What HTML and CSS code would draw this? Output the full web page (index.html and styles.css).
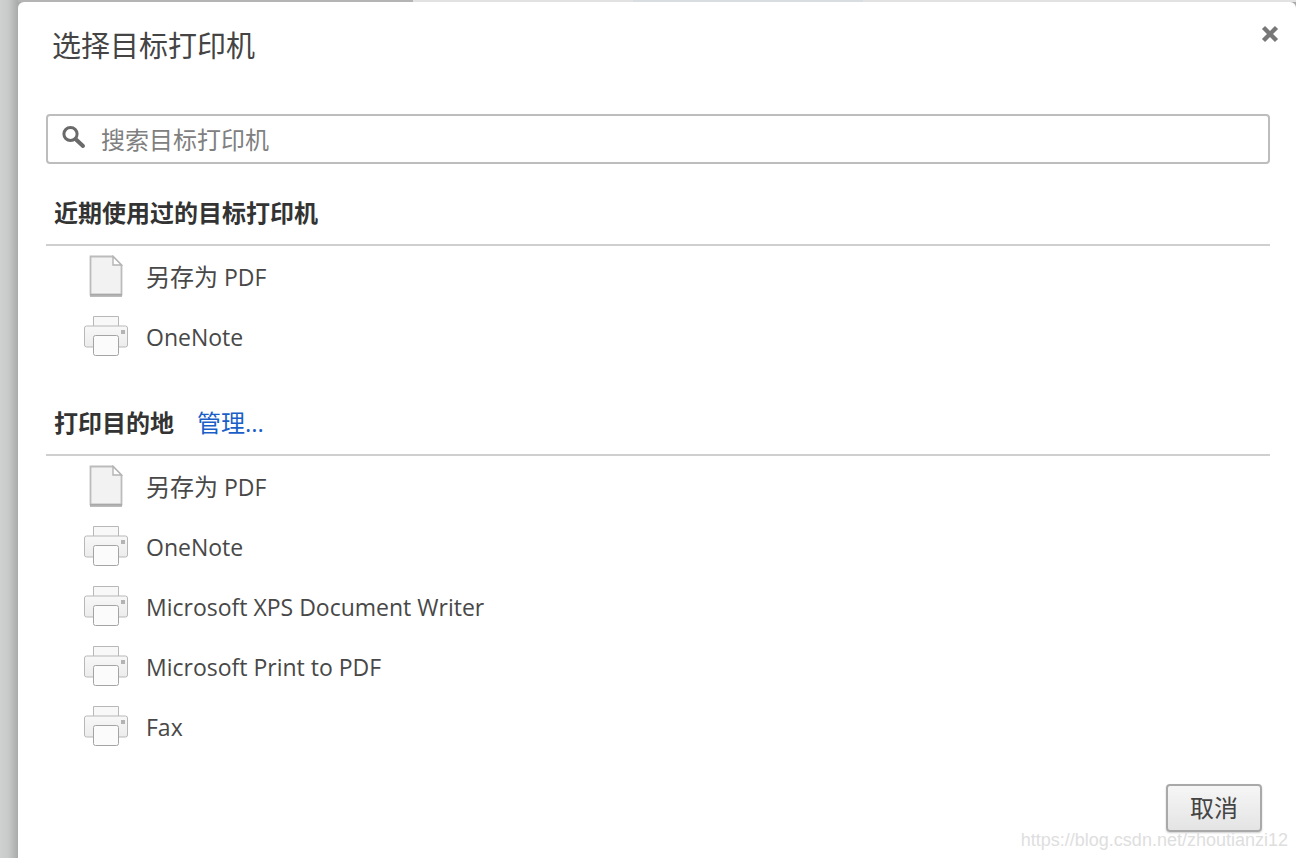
FILE: index.html
```html
<!DOCTYPE html>
<html lang="zh">
<head>
<meta charset="utf-8">
<title>选择目标打印机</title>
<link rel="stylesheet" href="styles.css">
</head>
<body>
<svg class="defs" width="0" height="0">
  <defs>
    <linearGradient id="pg" x1="0" y1="0" x2="0" y2="1"><stop offset="0" stop-color="#f8f8f8"/><stop offset="1" stop-color="#ececec"/></linearGradient>
    <symbol id="doc" viewBox="0 0 44 44">
      <path d="M7.5 1.5H30L38.5 10V39.5H7.5Z" fill="#f2f2f2" stroke="#bcbcbc" stroke-width="1.8"/>
      <path d="M7 40.5H39" stroke="#a0a0a0" stroke-width="3" opacity=".7"/>
      <path d="M30 1.5V10H38.5Z" fill="#fff" stroke="#b4b4b4" stroke-width="1.4"/>
    </symbol>
    <symbol id="printer" viewBox="0 0 44 40">
      <path d="M9.5 10V.5H34.5V10" fill="#f8f8f8" stroke="#b8b8b8"/>
      <rect x=".5" y="10" width="43" height="21" rx="2" fill="url(#pg)" stroke="#b8b8b8"/>
      <rect x="37" y="14" width="4" height="4" fill="#b4b4b4"/>
      <rect x="9.5" y="19.5" width="25" height="20" rx="2" fill="#fbfbfb" stroke="#a4a4a4"/>
    </symbol>
  </defs>
</svg>
<div class="topstrip"><div class="topstrip-dark"></div><div class="topstrip-ghost"></div></div>
<main class="dialog">
  <header class="dialog-head">
    <h1 class="title">选择目标打印机</h1>
    <svg class="close" width="20" height="20" viewBox="0 0 20 20"><path d="M3.5 3.5L16.500 16.500M16.500 3.500L3.500 16.500" stroke="#777" stroke-width="4.400"/></svg>
  </header>
  <div class="search">
    <svg class="search-icon" width="26" height="26" viewBox="0 0 26 26"><circle cx="10.500" cy="10" r="6.600" fill="none" stroke="#6a6a6a" stroke-width="3"/><path d="M15.500 15L23 22" stroke="#6a6a6a" stroke-width="4" stroke-linecap="round"/></svg>
    <span class="search-text">搜索目标打印机</span>
  </div>
  <section class="group group-recent">
    <h2 class="group-head"><span class="group-title">近期使用过的目标打印机</span></h2>
    <ul class="list">
      <li class="row"><span class="icon-cell"><svg class="ic" width="44" height="44"><use href="#doc"/></svg></span><span><span class="cjk">另存为</span> PDF</span></li>
      <li class="row"><span class="icon-cell"><svg class="ic ic-printer" width="44" height="40"><use href="#printer"/></svg></span><span>OneNote</span></li>
    </ul>
  </section>
  <section class="group group-all">
    <h2 class="group-head"><span class="group-title">打印目的地</span><a class="manage">管理...</a></h2>
    <ul class="list">
      <li class="row"><span class="icon-cell"><svg class="ic" width="44" height="44"><use href="#doc"/></svg></span><span><span class="cjk">另存为</span> PDF</span></li>
      <li class="row"><span class="icon-cell"><svg class="ic ic-printer" width="44" height="40"><use href="#printer"/></svg></span><span>OneNote</span></li>
      <li class="row"><span class="icon-cell"><svg class="ic ic-printer" width="44" height="40"><use href="#printer"/></svg></span><span>Microsoft XPS Document Writer</span></li>
      <li class="row"><span class="icon-cell"><svg class="ic ic-printer" width="44" height="40"><use href="#printer"/></svg></span><span>Microsoft Print to PDF</span></li>
      <li class="row"><span class="icon-cell"><svg class="ic ic-printer" width="44" height="40"><use href="#printer"/></svg></span><span>Fax</span></li>
    </ul>
  </section>
  <footer class="foot"><button class="cancel">取消</button></footer>
</main>
<div class="watermark">https://blog.csdn.net/zhoutianzi12</div>
</body>
</html>
```
FILE: styles.css
```css
* { box-sizing: border-box; }
html, body { margin: 0; height: 858px; overflow: hidden; }
body {
  position: relative;
  padding: 2px 0 0 18px;
  background: linear-gradient(90deg, #cfd1d1 0, #c9cbcb 8px, #a9abab 18px);
  font-family: "Open Sans", "Noto Sans CJK SC", sans-serif;
  color: #333;
}
.defs { position: absolute; }
.topstrip { position: absolute; left: 18px; right: 0; top: 0; height: 2px; background: #e2e2e2; display: flex; }
.topstrip-dark { width: 395px; background: #b4b4b4; }
.topstrip-ghost { width: 230px; margin-left: 220px; background: #d8dde1; }
.dialog {
  position: relative;
  height: 880px;
  background: #fff;
  border-radius: 6px 6px 0 0;
  padding: 0 26px 0 28px;
}
.dialog-head { height: 112px; display: flex; justify-content: space-between; align-items: flex-start; }
.title { margin: 22px 0 0 6px; font-size: 29px; line-height: 44px; font-weight: 400; color: #444; }
.close { margin: 22px -10px 0 0; }
.search {
  height: 50px;
  display: flex;
  align-items: center;
  border: 2px solid #bdbdbd;
  border-radius: 4px;
  padding-left: 12px;
}
.search-icon { flex: none; margin-top: -4px; }
.search-text { margin: 2px 0 0 15px; font-size: 24px; line-height: 44px; color: #808080; }
.group-head {
  margin: 0;
  height: 57px;
  padding: 0 0 11px 8px;
  display: flex;
  align-items: center;
  gap: 23px;
  border-bottom: 2px solid #cfcfcf;
  font-size: 24px;
  font-weight: 700;
}
.group-title { color: #333; }
.group-recent { margin-top: 25px; }
.group-all { margin-top: 32px; }
.manage { font-size: 24px; font-weight: 400; color: #1a5fc8; }
.list { list-style: none; margin: 0; padding: 1px 0 0; }
.row { height: 60px; display: flex; align-items: center; font-size: 23px; line-height: 30px; color: #484848; }
.cjk { font-size: 24px; }
.icon-cell { width: 100px; padding-left: 38px; display: flex; align-items: center; flex: none; }
.ic { display: block; margin-left: -1px; filter: blur(.4px); }
.ic-printer { margin-left: 0; margin-top: -2px; }
.foot { position: absolute; right: 34px; top: 782px; }
.cancel {
  width: 96px;
  height: 48px;
  padding: 0 0 3px;
  border: 2px solid #a9a9a9;
  border-radius: 4px;
  background: linear-gradient(#f6f6f6, #e4e4e4);
  box-shadow: 0 1px 2px rgba(0,0,0,.2);
  font: 24px "Open Sans", "Noto Sans CJK SC", sans-serif;
  color: #444;
}
.watermark {
  position: absolute;
  right: 8px;
  top: 830px;
  font: 18px "Liberation Sans", sans-serif;
  color: #dedede;
}
```
